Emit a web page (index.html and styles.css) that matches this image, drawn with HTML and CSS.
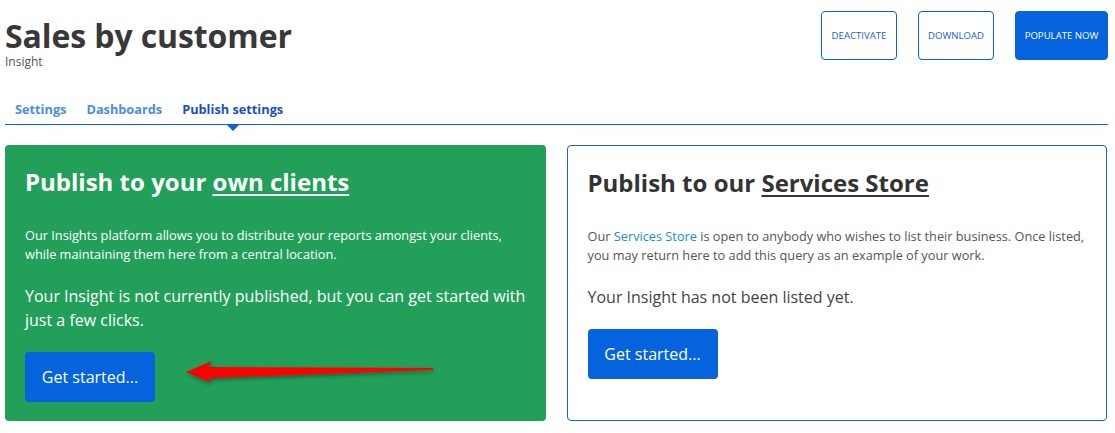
FILE: index.html
```html
<!DOCTYPE html>
<html lang="en">
<head>
<meta charset="utf-8">
<title>Sales by customer – Publish settings</title>
<link rel="stylesheet" href="styles.css">
</head>
<body>

<div class="page">
  <div class="top">
    <div class="title-block">
      <h1>Sales by customer</h1>
      <div class="subtitle">Insight</div>
    </div>
    <div class="actions">
      <button class="btn-outline">DEACTIVATE</button>
      <button class="btn-outline">DOWNLOAD</button>
      <button class="btn-solid">POPULATE NOW</button>
    </div>
  </div>

  <ul class="tabs">
    <li><a href="#">Settings</a></li>
    <li><a href="#">Dashboards</a></li>
    <li class="active"><a href="#">Publish settings</a></li>
  </ul>

  <div class="cards">
    <div class="card card-green">
      <h2>Publish to your <u>own clients</u></h2>
      <p class="small">Our Insights platform allows you to distribute your reports amongst your clients, while maintaining them here from a central location.</p>
      <p class="big">Your Insight is not currently published, but you can get started with just a few clicks.</p>
      <button class="btn-start">Get started...</button>

      <!-- annotation arrow -->
      <svg class="arrow" width="270" height="40" viewBox="0 0 270 40">
        <defs>
          <filter id="sh" x="-10%" y="-50%" width="120%" height="200%">
            <feDropShadow dx="1" dy="2" stdDeviation="2" flood-color="#000" flood-opacity=".4"/>
          </filter>
        </defs>
        <polygon filter="url(#sh)" fill="#ff0000"
          points="11,17 37,6 33,12 258,13 258,15 33,23 37,28"/>
      </svg>
    </div>

    <div class="card card-white">
      <h2>Publish to our <u>Services Store</u></h2>
      <p class="small">Our <a href="#">Services Store</a> is open to anybody who wishes to list their business. Once listed, you may return here to add this query as an example of your work.</p>
      <p class="big">Your Insight has not been listed yet.</p>
      <button class="btn-start">Get started...</button>
    </div>
  </div>
</div>

</body>
</html>
```

FILE: styles.css
```css
body{margin:0;background:#fff;font-family:"Open Sans","Noto Sans",sans-serif;color:#333;}
.page{padding:0 7px 0 5px;}

/* header */
.top{display:flex;justify-content:space-between;align-items:flex-start;}
.title-block{padding-top:16px;}
h1{margin:0;font-size:32px;font-weight:700;line-height:40px;color:#383838;letter-spacing:-.1px;}
.subtitle{font-size:12px;color:#555;line-height:14px;margin-top:-1px;}
.actions{display:flex;gap:21px;padding-top:11px;}
.actions button{height:49px;font-family:inherit;font-size:9.6px;border-radius:4px;cursor:pointer;padding:0 6px;}
.btn-outline{background:#fff;border:1px solid #0563d9;color:#1b5fc8;width:76px;}
.btn-solid{background:#0563dd;border:1px solid #0563dd;color:#fff;width:93px;}

/* tabs */
.tabs{list-style:none;margin:32px 0 0;padding:0 0 0 10px;display:flex;gap:20px;border-bottom:1px solid #0a62d6;}
.tabs li{position:relative;}
.tabs a{display:block;font-size:12.75px;font-weight:700;color:#4a8ee0;text-decoration:none;line-height:16px;padding:0 0 7px;}
.tabs li.active a{color:#1b4fc4;}
.tabs li.active::after{content:"";position:absolute;left:50%;bottom:-7px;margin-left:-6px;border:6px solid transparent;border-top:6px solid #0a62d6;border-bottom:0;}

/* cards */
.cards{display:grid;grid-template-columns:1fr 1fr;gap:21px;margin:20px 1px 0 0;}
.card{position:relative;border-radius:4px;height:276px;box-sizing:border-box;padding:22px 20px 20px;min-width:0;}
.card-green{background:#22a05a;color:#fff;}
.card-white{background:#fff;border:1px solid #1a62cc;color:#444;padding-right:14px;}
.card h2{margin:0;font-size:24px;font-weight:700;line-height:30px;}
.card-white h2{color:#333;}
.card h2 u{text-decoration-thickness:2px;text-underline-offset:3px;}
.small{font-size:12.75px;line-height:19px;margin:29px 0 0;}
.card-white .small{color:#555;}
.small a{color:#1a8ccc;text-decoration:none;}
.big{font-size:16px;line-height:24px;margin:20px 0 0;}
.card-white .big{color:#444;}
.btn-start{margin-top:20px;width:130px;height:50px;border:0;border-radius:4px;background:#0563dd;color:#fff;font-family:inherit;font-size:16px;cursor:pointer;}

.arrow{position:absolute;left:170px;top:210px;}
```
